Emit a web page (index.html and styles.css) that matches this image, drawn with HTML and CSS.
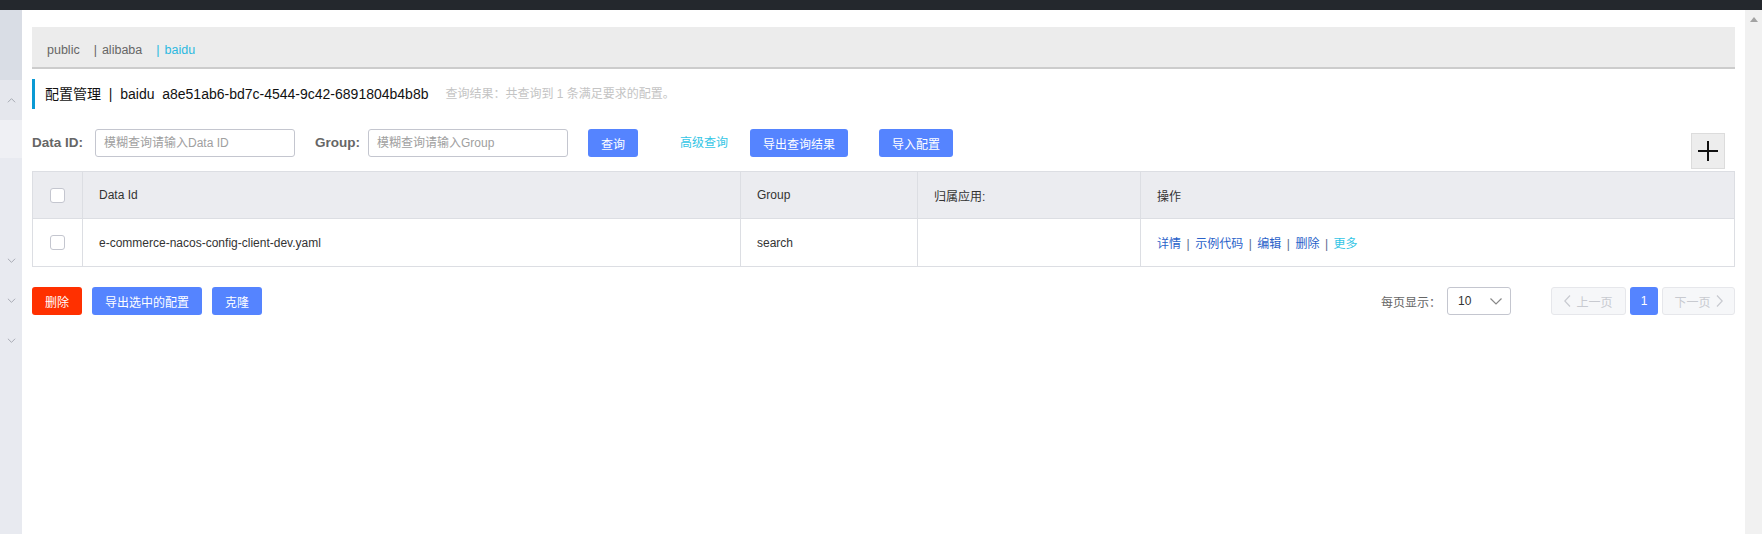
FILE: index.html
```html
<!DOCTYPE html>
<html lang="zh">
<head>
<meta charset="utf-8">
<title>配置管理</title>
<link rel="stylesheet" href="styles.css">
</head>
<body>
<div class="topbar"></div>
<div class="frame">
  <aside class="sidebar">
    <div class="sb-top"></div>
    <div class="sb-open"><svg class="chev" viewBox="0 0 10 6" width="9" height="6"><path d="M1 5.5 L5 1.5 L9 5.5" fill="none" stroke="#a0a4ad" stroke-width="1"/></svg></div>
    <div class="sb-light"></div>
    <div class="sb-rest">
      <div class="sb-item"><svg class="chev" viewBox="0 0 10 6" width="9" height="6"><path d="M1 0.5 L5 4.5 L9 0.5" fill="none" stroke="#a0a4ad" stroke-width="1"/></svg></div>
      <div class="sb-item"><svg class="chev" viewBox="0 0 10 6" width="9" height="6"><path d="M1 0.5 L5 4.5 L9 0.5" fill="none" stroke="#a0a4ad" stroke-width="1"/></svg></div>
      <div class="sb-item"><svg class="chev" viewBox="0 0 10 6" width="9" height="6"><path d="M1 0.5 L5 4.5 L9 0.5" fill="none" stroke="#a0a4ad" stroke-width="1"/></svg></div>
    </div>
  </aside>
  <main class="main">
    <div class="tabs">
      <span class="tab">public</span>
      <span class="tab"><span class="bar">|</span>alibaba</span>
      <span class="tab active"><span class="bar">|</span>baidu</span>
    </div>
    <div class="title">
      <span class="title-main">配置管理&nbsp;&nbsp;|&nbsp;&nbsp;baidu&nbsp;&nbsp;a8e51ab6-bd7c-4544-9c42-6891804b4b8b</span>
      <span class="title-sub">查询结果：共查询到 1 条满足要求的配置。</span>
    </div>
    <div class="search">
      <label class="lbl">Data ID:</label>
      <div class="input">模糊查询请输入Data ID</div>
      <label class="lbl lbl-group">Group:</label>
      <div class="input">模糊查询请输入Group</div>
      <button class="btn btn-primary btn-query">查询</button>
      <a class="adv">高级查询</a>
      <button class="btn btn-primary btn-export">导出查询结果</button>
      <button class="btn btn-primary btn-import">导入配置</button>
      <div class="spacer"></div>
      <div class="plus"><svg viewBox="0 0 20 20" width="20" height="20"><path d="M0 10 H20 M10 0 V20" stroke="#111" stroke-width="2"/></svg></div>
    </div>
    <table class="grid">
      <colgroup>
        <col class="c-chk"><col class="c-id"><col class="c-group"><col class="c-app"><col class="c-op">
      </colgroup>
      <thead>
        <tr>
          <th class="chk"><span class="checkbox"></span></th>
          <th>Data Id</th>
          <th>Group</th>
          <th>归属应用:</th>
          <th>操作</th>
        </tr>
      </thead>
      <tbody>
        <tr>
          <td class="chk"><span class="checkbox"></span></td>
          <td>e-commerce-nacos-config-client-dev.yaml</td>
          <td>search</td>
          <td></td>
          <td class="ops"><a>详情</a><span class="sep">|</span><a>示例代码</a><span class="sep">|</span><a>编辑</a><span class="sep">|</span><a>删除</a><span class="sep">|</span><a class="more">更多</a></td>
        </tr>
      </tbody>
    </table>
    <div class="footer">
      <button class="btn btn-danger">删除</button>
      <button class="btn btn-primary btn-exp-sel">导出选中的配置</button>
      <button class="btn btn-primary btn-clone">克隆</button>
      <div class="spacer"></div>
      <span class="pagesize-lbl">每页显示：</span>
      <div class="select"><span>10</span><svg viewBox="0 0 12 7" width="12" height="7"><path d="M0.5 0.5 L6 6 L11.5 0.5" fill="none" stroke="#888" stroke-width="1.2"/></svg></div>
      <div class="pager">
        <button class="pg pg-prev"><svg viewBox="0 0 7 12" width="7" height="12"><path d="M6 0.5 L0.8 6 L6 11.5" fill="none" stroke="#c8cad0" stroke-width="1.2"/></svg>上一页</button>
        <button class="pg pg-cur">1</button>
        <button class="pg pg-next">下一页<svg viewBox="0 0 7 12" width="7" height="12"><path d="M1 0.5 L6.2 6 L1 11.5" fill="none" stroke="#c8cad0" stroke-width="1.2"/></svg></button>
      </div>
    </div>
  </main>
  <div class="scrollbar">
    <svg class="sc-up" viewBox="0 0 8 5" width="8" height="5"><path d="M0 5 L4 0 L8 5 Z" fill="#a3a3a3"/></svg>
  </div>
</div>
</body>
</html>
```
FILE: styles.css
```css
* { box-sizing: border-box; }
html, body { margin: 0; padding: 0; }
body {
  width: 1762px;
  height: 534px;
  overflow: hidden;
  font-family: "Liberation Sans", "Noto Sans CJK SC", sans-serif;
  font-size: 12px;
  color: #333;
  background: #fff;
}
.topbar { height: 10px; background: #24282d; }
.frame { display: flex; height: 524px; }

.sidebar { width: 22px; display: flex; flex-direction: column; background: #e8eaf0; }
.sb-top { height: 70px; background: #d9dde5; }
.sb-open { height: 40px; background: #e5e7ed; display: flex; align-items: center; justify-content: center; }
.sb-light { height: 38px; background: #eff0f4; }
.sb-rest { flex: 1; padding-top: 100px; display: flex; flex-direction: column; gap: 34px; }
.sb-item { height: 6px; display: flex; justify-content: center; }
.chev { display: block; }

.main { flex: 1; padding: 17px 10px 0 10px; min-width: 0; }
.scrollbar { width: 17px; background: #f1f1f1; display: flex; justify-content: center; padding-top: 7px; }
.sc-up { display: block; }

.tabs {
  height: 42px;
  background: #ececec;
  border-bottom: 2px solid #cccccc;
  display: flex;
  align-items: center;
  padding-left: 15px;
  padding-top: 5px;
  gap: 14px;
  color: #666;
  font-size: 12.5px;
}
.tab .bar { margin-right: 5px; }
.tab.active { color: #2bb8e0; }

.title {
  margin-top: 10px;
  height: 30px;
  border-left: 3px solid #0a9ad4;
  display: flex;
  align-items: center;
  padding-left: 10px;
  padding-bottom: 3px;
}
.title-main { font-size: 14px; color: #111; }
.title-sub { font-size: 12px; color: #c4c4c4; margin-left: 17px; }

.search {
  margin-top: 20px;
  display: flex;
  align-items: flex-start;
  height: 40px;
}
.lbl { font-weight: bold; color: #666; font-size: 13.5px; line-height: 28px; width: 63px; }
.lbl-group { margin-left: 20px; width: 53px; }
.input {
  width: 200px;
  height: 28px;
  border: 1px solid #c4c6cf;
  border-radius: 3px;
  padding-left: 8px;
  line-height: 26px;
  color: #a0a0a0;
  font-size: 12px;
}
.btn {
  height: 28px;
  border: none;
  border-radius: 3px;
  font-family: inherit;
  font-size: 12px;
  color: #fff;
  padding: 0;
}
.btn-primary { background: #5584ff; }
.btn-danger { background: #ff3000; }
.btn-query { width: 50px; margin-left: 20px; }
.adv { color: #33c5e5; line-height: 28px; margin-left: 42px; }
.btn-export { width: 98px; margin-left: 22px; }
.btn-import { width: 74px; margin-left: 31px; }
.spacer { flex: 1; }
.plus {
  margin-top: 4px;
  width: 34px;
  height: 36px;
  background: #ededed;
  border: 1px solid #dcdcdc;
  display: flex;
  align-items: center;
  justify-content: center;
  margin-right: 10px;
}
.plus svg { display: block; }

.grid {
  width: 100%;
  border-collapse: collapse;
  table-layout: fixed;
  margin-top: 2px;
  border: 1px solid #dcdee3;
}
.c-chk { width: 50px; }
.c-id { width: 658px; }
.c-group { width: 177px; }
.c-app { width: 223px; }
.grid th, .grid td {
  border: 1px solid #dcdee3;
  height: 48px;
  padding: 0 0 0 16px;
  text-align: left;
  font-weight: normal;
  font-size: 12px;
  color: #333;
}
.grid th { background: #ebecf0; height: 47px; }
.grid .chk { padding: 0; text-align: center; }
.checkbox {
  display: inline-block;
  width: 15px;
  height: 15px;
  border: 1px solid #c4c6cf;
  border-radius: 3px;
  background: #fff;
  vertical-align: middle;
}
.ops { color: #2a62c9; }
.ops a { color: #2a62c9; }
.ops .sep { margin: 0 5.5px; color: #5b6b90; }
.ops .more { color: #33c5e5; }

.footer {
  margin-top: 20px;
  display: flex;
  align-items: center;
  height: 28px;
}
.footer .btn-danger { width: 50px; }
.btn-exp-sel { width: 110px; margin-left: 10px; }
.btn-clone { width: 50px; margin-left: 10px; }
.pagesize-lbl { color: #666; font-size: 12px; margin-right: 6px; }
.select {
  width: 64px;
  height: 28px;
  border: 1px solid #c4c6cf;
  border-radius: 3px;
  display: flex;
  align-items: center;
  justify-content: space-between;
  padding: 0 8px 0 10px;
  color: #333;
}
.select svg { display: block; }
.pager { display: flex; margin-left: 40px; gap: 4px; }
.pg {
  height: 28px;
  border-radius: 3px;
  font-family: inherit;
  font-size: 12px;
  display: flex;
  align-items: center;
  justify-content: center;
  gap: 5px;
  padding: 0;
}
.pg-prev, .pg-next { width: 75px; background: #f6f7f9; border: 1px solid #e6e7eb; color: #c8cad0; }
.pg-next { width: 73px; }
.pg-cur { width: 28px; background: #5584ff; border: none; color: #fff; }
.pg svg { display: block; }
```
